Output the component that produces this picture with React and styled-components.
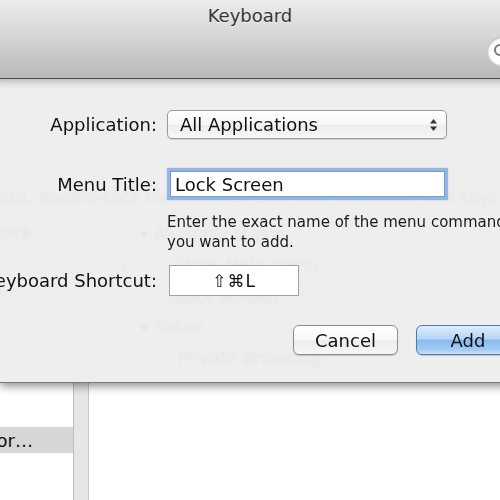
import React from "react";
import styled, { createGlobalStyle } from "styled-components";

const Global = createGlobalStyle`
    html, body {
        margin: 0;
        padding: 0;
        overflow: hidden;
        background: #fff;
    }
    #root {
        width: 500px;
        height: 500px;
    }
`;

const Window = styled.div`
    position: relative;
    width: 500px;
    height: 500px;
    overflow: hidden;
    background: #fff;
    display: flex;
    flex-direction: column;
    font-family: "DejaVu Sans", "Liberation Sans", sans-serif;
    color: #111;
`;

const TitleBar = styled.div`
    height: 78px;
    flex-shrink: 0;
    border-bottom: 1px solid #4d4d4d;
    background: linear-gradient(#ececec, #d6d6d6 45%, #b8b8b8);
    display: flex;
    flex-direction: column;
    align-items: center;
    position: relative;
    z-index: 3;
`;

const Title = styled.div`
    margin-top: 4px;
    font-size: 18px;
    line-height: 24px;
    color: #363636;
    text-shadow: 0 1px 0 rgba(255, 255, 255, 0.6);
`;

const Toolbar = styled.div`
    align-self: stretch;
    display: flex;
    justify-content: flex-end;
    margin-top: 9px;
`;

const SearchField = styled.div`
    width: 80px;
    height: 28px;
    margin-right: -68px;
    border-radius: 14px;
    background: #fff;
    box-shadow: inset 0 1px 2px rgba(0, 0, 0, 0.35), 0 1px 0 rgba(255, 255, 255, 0.5);
    display: flex;
    align-items: center;
    padding-left: 5px;
    box-sizing: border-box;
`;

const Body = styled.div`
    flex: 1;
    display: flex;
    flex-direction: column;
    font-size: 17px;
    color: #555;
`;

const Hint = styled.div`
    height: 136px;
    flex-shrink: 0;
    display: flex;
    align-items: flex-end;
    padding-bottom: 8px;
    box-sizing: border-box;
    margin-left: -150px;
    white-space: nowrap;
    line-height: 20px;
`;

const Panes = styled.div`
    flex: 1;
    display: flex;
    border-top: 1px solid #c4c4c4;
`;

const Sidebar = styled.div`
    width: 200px;
    margin-left: -127px;
    flex-shrink: 0;
    padding-top: 3px;
    background: #fff;
    font-size: 18px;
`;

const SideItem = styled.div`
    height: 26px;
    display: flex;
    align-items: center;
    justify-content: flex-end;
    padding-right: 40px;
    white-space: nowrap;
    color: ${(p) => (p.$selected ? "#111" : "#555")};
    background: ${(p) => (p.$selected ? "#d6d6d6" : "transparent")};
`;

const Splitter = styled.div`
    width: 14px;
    flex-shrink: 0;
    background: #e6e6e6;
    border-left: 1px solid #bdbdbd;
    border-right: 1px solid #c6c6c6;
`;

const Outline = styled.div`
    flex: 1;
    padding-top: 2px;
    background: #fff;
`;

const OutlineRow = styled.div`
    height: 31px;
    display: flex;
    align-items: center;
    padding-left: ${(p) => p.$indent}px;
    white-space: nowrap;
    background: ${(p) => (p.$selected ? "#e4e4e4" : "transparent")};
`;

const Check = styled.span`
    width: 70px;
    margin-left: -70px;
    padding-left: 14px;
    box-sizing: border-box;
`;

const Sheet = styled.div`
    position: absolute;
    top: 79px;
    left: 0;
    width: 540px;
    height: 304px;
    box-sizing: border-box;
    padding: 31px 20px 0 0;
    background: rgba(237, 237, 237, 0.95);
    backdrop-filter: blur(1.5px);
    border-bottom: 1px solid #7a7a7a;
    box-shadow: 0 3px 9px rgba(0, 0, 0, 0.45),
        inset 0 9px 9px -7px rgba(0, 0, 0, 0.28);
    z-index: 2;
    display: flex;
    flex-direction: column;
`;

const Row = styled.div`
    display: flex;
    align-items: center;
    margin-top: ${(p) => p.$top || 0}px;
`;

const Label = styled.div`
    width: 157px;
    margin-right: 10px;
    flex-shrink: 0;
    display: flex;
    justify-content: flex-end;
    white-space: nowrap;
    font-size: 18px;
    color: #111;
`;

const Popup = styled.div`
    width: 280px;
    height: 29px;
    box-sizing: border-box;
    border: 1px solid #9a9a9a;
    border-radius: 5px;
    background: linear-gradient(#ffffff, #f6f6f6 50%, #ececec 51%, #f7f7f7);
    box-shadow: 0 1px 1px rgba(0, 0, 0, 0.15);
    display: flex;
    align-items: center;
    justify-content: space-between;
    padding: 0 8px 0 12px;
    font-size: 18px;
`;

const TextField = styled.input`
    width: 275px;
    height: 26px;
    margin-left: 3px;
    box-sizing: border-box;
    border: 1px solid #7d9cc4;
    box-shadow: 0 0 1px 3px rgba(112, 162, 222, 0.72);
    padding: 0 4px;
    font-family: "DejaVu Sans", "Liberation Sans", sans-serif;
    font-size: 18px;
    color: #111;
    background: #fff;
    outline: none;
`;

const Help = styled.div`
    margin: 15px 0 0 167px;
    font-size: 15px;
    line-height: 20px;
    color: #1a1a1a;
    white-space: nowrap;
`;

const ShortcutField = styled.div`
    width: 130px;
    height: 31px;
    margin-left: 2px;
    box-sizing: border-box;
    border: 1px solid #a2a2a2;
    background: #fff;
    display: flex;
    align-items: center;
    justify-content: center;
    font-size: 17px;
    letter-spacing: 1px;
    color: #111;
`;

const Buttons = styled.div`
    display: flex;
    justify-content: flex-end;
    gap: 18px;
    margin-top: 29px;
`;

const Button = styled.div`
    width: ${(p) => (p.$primary ? 104 : 105)}px;
    height: 30px;
    box-sizing: border-box;
    border-radius: 6px;
    border: 1px solid ${(p) => (p.$primary ? "#5179ad" : "#8e8e8e")};
    background: ${(p) =>
        p.$primary
            ? "linear-gradient(#dcedfc, #b5d6f6 45%, #86bbef 52%, #a3ccf4 85%, #c8e2fb)"
            : "linear-gradient(#ffffff, #f7f7f7 50%, #ededed 51%, #f6f6f6)"};
    box-shadow: 0 1px 1px rgba(0, 0, 0, 0.18);
    display: flex;
    align-items: center;
    justify-content: center;
    font-size: 18px;
    color: #111;
`;

const Magnifier = () => (
    <svg width="16" height="16" viewBox="0 0 16 16">
        <circle cx="7" cy="7" r="5" fill="none" stroke="#7a7a7a" strokeWidth="2" />
        <line x1="11" y1="11" x2="15" y2="15" stroke="#7a7a7a" strokeWidth="2.2" />
    </svg>
);

const Arrows = () => (
    <svg width="9" height="14" viewBox="0 0 9 14">
        <path d="M4.5 1 L8 5.5 H1 Z" fill="#333" />
        <path d="M4.5 13 L8 8.5 H1 Z" fill="#333" />
    </svg>
);

const App = () => {
    const sideItems = [
        "Launchpad & Dock",
        "Mission Control",
        "Keyboard",
        "Screen Shots",
        "Services",
        "Spotlight",
        "Accessibility",
        "Services",
        "Application Shortcuts Editor…",
    ];

    return (
        <Window>
            <Global />
            <TitleBar>
                <Title>Keyboard</Title>
                <Toolbar>
                    <SearchField>
                        <Magnifier />
                    </SearchField>
                </Toolbar>
            </TitleBar>

            <Body>
                <Hint>
                    To change a shortcut, double-click the shortcut and hold down the new keys.
                </Hint>
                <Panes>
                    <Sidebar>
                        {sideItems.map((name, i) => (
                            <SideItem key={i} $selected={i === 8}>
                                {i === 0 || i === 8 ? name : ""}
                            </SideItem>
                        ))}
                    </Sidebar>
                    <Splitter />
                    <Outline>
                        <OutlineRow $indent={51}>▾ All Applications</OutlineRow>
                        <OutlineRow $indent={86}>
                            <Check>✓</Check>
                            Show Help menu
                        </OutlineRow>
                        <OutlineRow $indent={86} $selected>
                            Lock Screen
                        </OutlineRow>
                        <OutlineRow $indent={51}>▾ Safari</OutlineRow>
                        <OutlineRow $indent={89}>Private Browsing</OutlineRow>
                    </Outline>
                </Panes>
            </Body>

            <Sheet>
                <Row>
                    <Label>Application:</Label>
                    <Popup>
                        <span>All Applications</span>
                        <Arrows />
                    </Popup>
                </Row>
                <Row $top={32}>
                    <Label>Menu Title:</Label>
                    <TextField readOnly value="Lock Screen" />
                </Row>
                <Help>
                    Enter the exact name of the menu command
                    <br />
                    you want to add.
                </Help>
                <Row $top={13}>
                    <Label>Keyboard Shortcut:</Label>
                    <ShortcutField>⇧⌘L</ShortcutField>
                </Row>
                <Buttons>
                    <Button>Cancel</Button>
                    <Button $primary>Add</Button>
                </Buttons>
            </Sheet>
        </Window>
    );
};

export default App;
